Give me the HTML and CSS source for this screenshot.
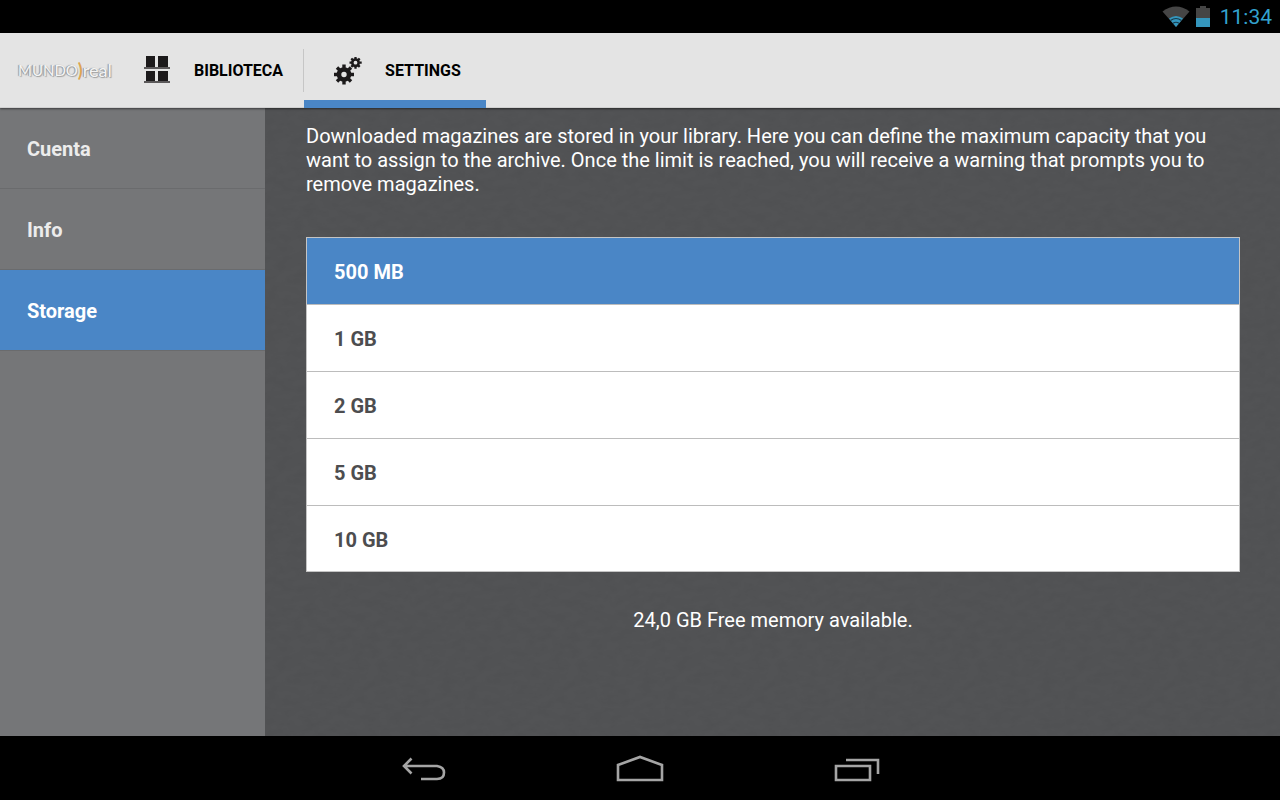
FILE: index.html
```html
<!DOCTYPE html>
<html lang="en">
<head>
<meta charset="utf-8">
<meta name="viewport" content="width=device-width, initial-scale=1">
<title>Settings</title>
<link rel="stylesheet" href="styles.css">
</head>
<body>
<div class="status">
  <svg class="wifi" viewBox="0 0 28 22" aria-hidden="true">
    <path d="M0.500 5.500Q14 -4.500 27.500 5.500L14 21Z" fill="#454545"/>
    <path d="M7 12.500Q14 7.500 21 12.500L14 21Z" fill="#3496bd"/>
    <path d="M8.500 14.500Q14 10.500 19.500 14.500M11 17.300Q14 15.200 17 17.300" fill="none" stroke="#16394a" stroke-width="1.200"/>
  </svg>
  <svg class="battery" viewBox="0 0 14 21" aria-hidden="true">
    <path d="M0 2H4V0H10V2H14V13H0Z" fill="#454545"/>
    <path d="M0 12H14V21H0Z" fill="#3496bd"/>
  </svg>
  <time class="clock">11:34</time>
</div>
<header class="bar">
  <div class="logo"><span class="logo-main">MUNDO</span><span class="logo-arc">)</span><span class="logo-real">real</span></div>
  <nav class="tabs">
    <a class="tab tab-library" href="#library">
      <svg class="tab-icon" viewBox="0 0 28 28" aria-hidden="true">
        <path d="M3 0H12V11H3ZM15 0H25V11H15ZM3 15H12V25H3ZM15 15H25V25H15Z" fill="#1c1a1b"/>
        <path d="M1 11H27V13H1ZM1 25H27V27H1Z" fill="#5b595a"/>
      </svg>
      <span>BIBLIOTECA</span>
    </a>
    <a class="tab tab-settings" href="#settings" aria-current="page">
      <svg class="tab-icon" viewBox="0 0 28 28" aria-hidden="true">
        <g fill="none" stroke="#1c1a1b">
          <circle cx="10" cy="17.500" r="5" stroke-width="4.600"/>
          <path stroke-width="3.400" d="M10 7.500V11.500M10 23.500V27.500M0 17.500H4M16 17.500H20M3 10.500L6 13.500M14 21.500L17 24.500M17 10.500L14 13.500M6 21.500L3 24.500"/>
          <circle cx="21.500" cy="5.700" r="3.200" stroke-width="2.600"/>
          <path stroke-width="2.300" d="M21.500 -0.300V2M21.500 9.500V11.700M15.500 5.700H18M25.500 5.700H27.700M17.300 1.500L18.900 3.100M24.100 8.300L25.700 9.900M25.700 1.500L24.100 3.100M18.900 8.300L17.300 9.900"/>
        </g>
      </svg>
      <span>SETTINGS</span>
    </a>
  </nav>
</header>
<div class="body">
  <nav class="side">
    <a class="side-item" href="#cuenta">Cuenta</a>
    <a class="side-item" href="#info">Info</a>
    <a class="side-item side-active" href="#storage" aria-current="page">Storage</a>
  </nav>
  <main class="content">
    <p class="intro">Downloaded magazines are stored in your library. Here you can define the maximum capacity that you want to assign to the archive. Once the limit is reached, you will receive a warning that prompts you to remove magazines.</p>
    <div class="options">
      <button class="option option-active" type="button" aria-pressed="true">500 MB</button>
      <button class="option" type="button">1 GB</button>
      <button class="option" type="button">2 GB</button>
      <button class="option" type="button">5 GB</button>
      <button class="option" type="button">10 GB</button>
    </div>
    <p class="free">24,0 GB Free memory available.</p>
  </main>
</div>
<footer class="system">
  <button class="key" type="button" aria-label="Back">
    <svg viewBox="0 0 48 32" aria-hidden="true"><path d="M5 12H38Q45 13 45 18.500Q45 25 38 25H22M12.500 4.500L5 12L12.500 19.500" fill="none" stroke="#a5a5a5" stroke-width="2.600"/></svg>
  </button>
  <button class="key" type="button" aria-label="Home">
    <svg viewBox="0 0 48 32" aria-hidden="true"><path d="M2 26V11L24 3L46 11V26Z" fill="none" stroke="#a5a5a5" stroke-width="2.600"/></svg>
  </button>
  <button class="key" type="button" aria-label="Recent apps">
    <svg viewBox="0 0 48 32" aria-hidden="true"><path d="M3 12H37V26H3ZM13 6H45V20" fill="none" stroke="#a5a5a5" stroke-width="2.600"/></svg>
  </button>
</footer>
</body>
</html>
```
FILE: styles.css
```css
* { box-sizing: border-box; }
body {
  margin: 0;
  min-height: 100vh;
  display: flex;
  flex-direction: column;
  background: #000;
  font-family: Roboto, "Liberation Sans", sans-serif;
}
a { color: inherit; text-decoration: none; }
button { font: inherit; border: 0; margin: 0; cursor: pointer; }
p { margin: 0; }

.status {
  height: 33px;
  display: flex;
  justify-content: flex-end;
  align-items: center;
  padding-right: 8px;
}
.wifi { width: 28px; height: 22px; margin-right: 6px; }
.battery { width: 14px; height: 21px; margin-right: 10px; }
.clock { color: #33a3cf; font-size: 21px; line-height: 32px; padding-top: 1px; }

.bar {
  position: relative;
  height: 75px;
  display: flex;
  background: #e4e4e4;
  border-bottom: 1px solid #d0d0d0;
  box-shadow: 0 1px 2px rgba(0, 0, 0, 0.5);
}
.logo {
  width: 123px;
  padding-left: 18px;
  display: flex;
  align-items: center;
  font-family: Lato, sans-serif;
  font-size: 15px;
  color: #f4f4f4;
  text-shadow: -1px 0 1px #8b8b8b, 1px 1px 1px #a0a0a0;
}
.logo-arc { color: #dca552; font-size: 18px; font-weight: 700; text-shadow: none; }
.logo-real { font-size: 18px; }
.tabs { display: flex; }
.tab {
  display: flex;
  align-items: center;
  gap: 23px;
  font-size: 16px;
  font-weight: 700;
  color: #000;
  padding: 0 20px;
}
.tab-library {
  background: linear-gradient(#c6c6c6, #c6c6c6) right 16px / 1px 43px no-repeat;
  padding-right: 21px;
}
.tab-settings {
  height: 75px;
  padding: 0 25px 0 30px;
  box-shadow: inset 0 -8px #4a86c6;
}
.tab-icon { width: 28px; height: 28px; }

.body { flex: 1; display: flex; }
.side { width: 265px; background: #757678; }
.side-item {
  display: flex;
  align-items: center;
  height: 81px;
  padding: 2px 0 0 27px;
  border-bottom: 1px solid #6a6b6d;
  font-size: 20px;
  font-weight: 700;
  color: #ececec;
}
.side-active { background: #4a86c6; color: #fff; }

.content {
  flex: 1;
  padding: 16px 40px 0 41px;
  color: #fff;
  font-size: 20px;
  line-height: 24px;
  background: #525355 url("data:image/svg+xml,%3Csvg xmlns='http://www.w3.org/2000/svg' width='200' height='200'%3E%3Cfilter id='n'%3E%3CfeTurbulence type='fractalNoise' baseFrequency='.08 .14' numOctaves='3' stitchTiles='stitch'/%3E%3CfeColorMatrix values='0 0 0 0 0 0 0 0 0 0 0 0 0 0 0 1 0 0 0 -.35'/%3E%3C/filter%3E%3Crect width='200' height='200' filter='url(%23n)' opacity='.06'/%3E%3C/svg%3E");
}
.options {
  margin-top: 41px;
  border: 1px solid #c4c4c4;
  background: #fff;
}
.option {
  display: block;
  width: 100%;
  height: 67px;
  padding: 2px 27px 0;
  text-align: left;
  font-weight: 700;
  color: #4d4d4f;
  background: #fff;
  border-bottom: 1px solid #bcbcbc;
}
.option:last-child { height: 65px; border-bottom: 0; }
.option-active { color: #fff; background: #4a86c6; }
.free { margin-top: 36px; text-align: center; }

.system {
  height: 64px;
  padding-top: 4px;
  display: flex;
  justify-content: center;
  align-items: center;
  gap: 169px;
}
.key { width: 48px; height: 32px; padding: 0; background: none; }
.key svg { display: block; width: 48px; height: 32px; }
```
